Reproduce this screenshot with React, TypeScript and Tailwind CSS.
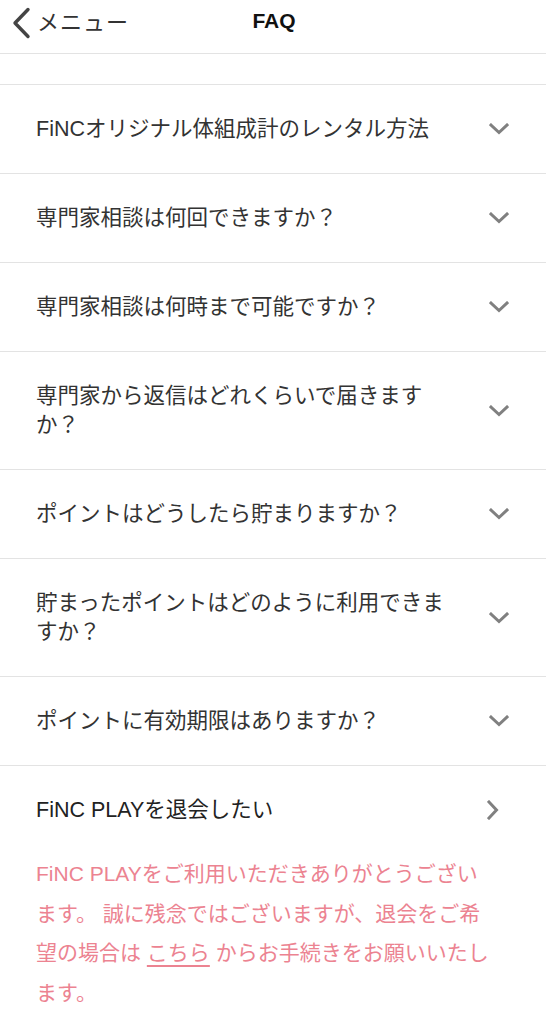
const questions: string[] = [
  'FiNCオリジナル体組成計のレンタル方法',
  '専門家相談は何回できますか？',
  '専門家相談は何時まで可能ですか？',
  '専門家から返信はどれくらいで届きますか？',
  'ポイントはどうしたら貯まりますか？',
  '貯まったポイントはどのように利用できますか？',
  'ポイントに有効期限はありますか？',
];

function ChevronDown() {
  return (
    <svg width="20" height="12" viewBox="0 0 20 12" fill="none">
      <path d="M2 2l8 7.5L18 2" stroke="#808080" strokeWidth="3" strokeLinecap="square" />
    </svg>
  );
}

function ChevronRight() {
  return (
    <svg width="12" height="20" viewBox="0 0 12 20" fill="none">
      <path d="M2 2l7.5 8L2 18" stroke="#808080" strokeWidth="3" strokeLinecap="square" />
    </svg>
  );
}

function BackChevron() {
  return (
    <svg width="20" height="32" viewBox="0 0 20 32" fill="none">
      <path d="M17 2.5L4 16l13 13.5" stroke="#444" strokeWidth="3.4" strokeLinecap="round" strokeLinejoin="round" />
    </svg>
  );
}

export default function App() {
  return (
    <div
      className="min-h-screen bg-white text-[#333]"
      style={{ fontFamily: '"Liberation Sans", "Noto Sans CJK JP", sans-serif' }}
    >
      {/* Header */}
      <div className="relative h-[54px] flex items-center border-b border-[#e3e3e3]">
        <div className="flex items-center pl-[11px] pb-[8px]">
          <BackChevron />
          <span className="text-[22px] leading-none text-[#333] ml-[6px] tracking-[1px]">メニュー</span>
        </div>
        <div className="absolute left-0 right-0 top-[10px] text-center font-bold text-[21px] leading-none text-[#111] pl-[2px]">
          FAQ
        </div>
      </div>

      {/* Spacer */}
      <div className="h-[31px] border-b border-[#e3e3e3]" />

      {/* Questions */}
      {questions.map((q) => (
        <div key={q} className="flex items-center border-b border-[#e3e3e3] pl-[36px] pr-[37px] py-[29.5px]">
          <div className="w-[420px] text-[21.5px] leading-[29px] text-[#333]">{q}</div>
          <div className="flex-1 flex justify-end">
            <ChevronDown />
          </div>
        </div>
      ))}

      {/* Withdraw */}
      <div className="flex items-center pl-[36px] pr-[47px] pt-[29.5px] pb-[29.5px]">
        <div className="flex-1 text-[21.5px] leading-[29px] text-[#222]">FiNC PLAYを退会したい</div>
        <ChevronRight />
      </div>

      <p className="w-[490px] pl-[36px] text-[21px] leading-[39.5px] text-[#ec8391] pb-[20px]">
        FiNC PLAYをご利用いただきありがとうございます。 誠に残念ではございますが、退会をご希望の場合は{' '}
        <span className="underline underline-offset-[5px]">こちら</span> からお手続きをお願いいたします。
      </p>
    </div>
  );
}
